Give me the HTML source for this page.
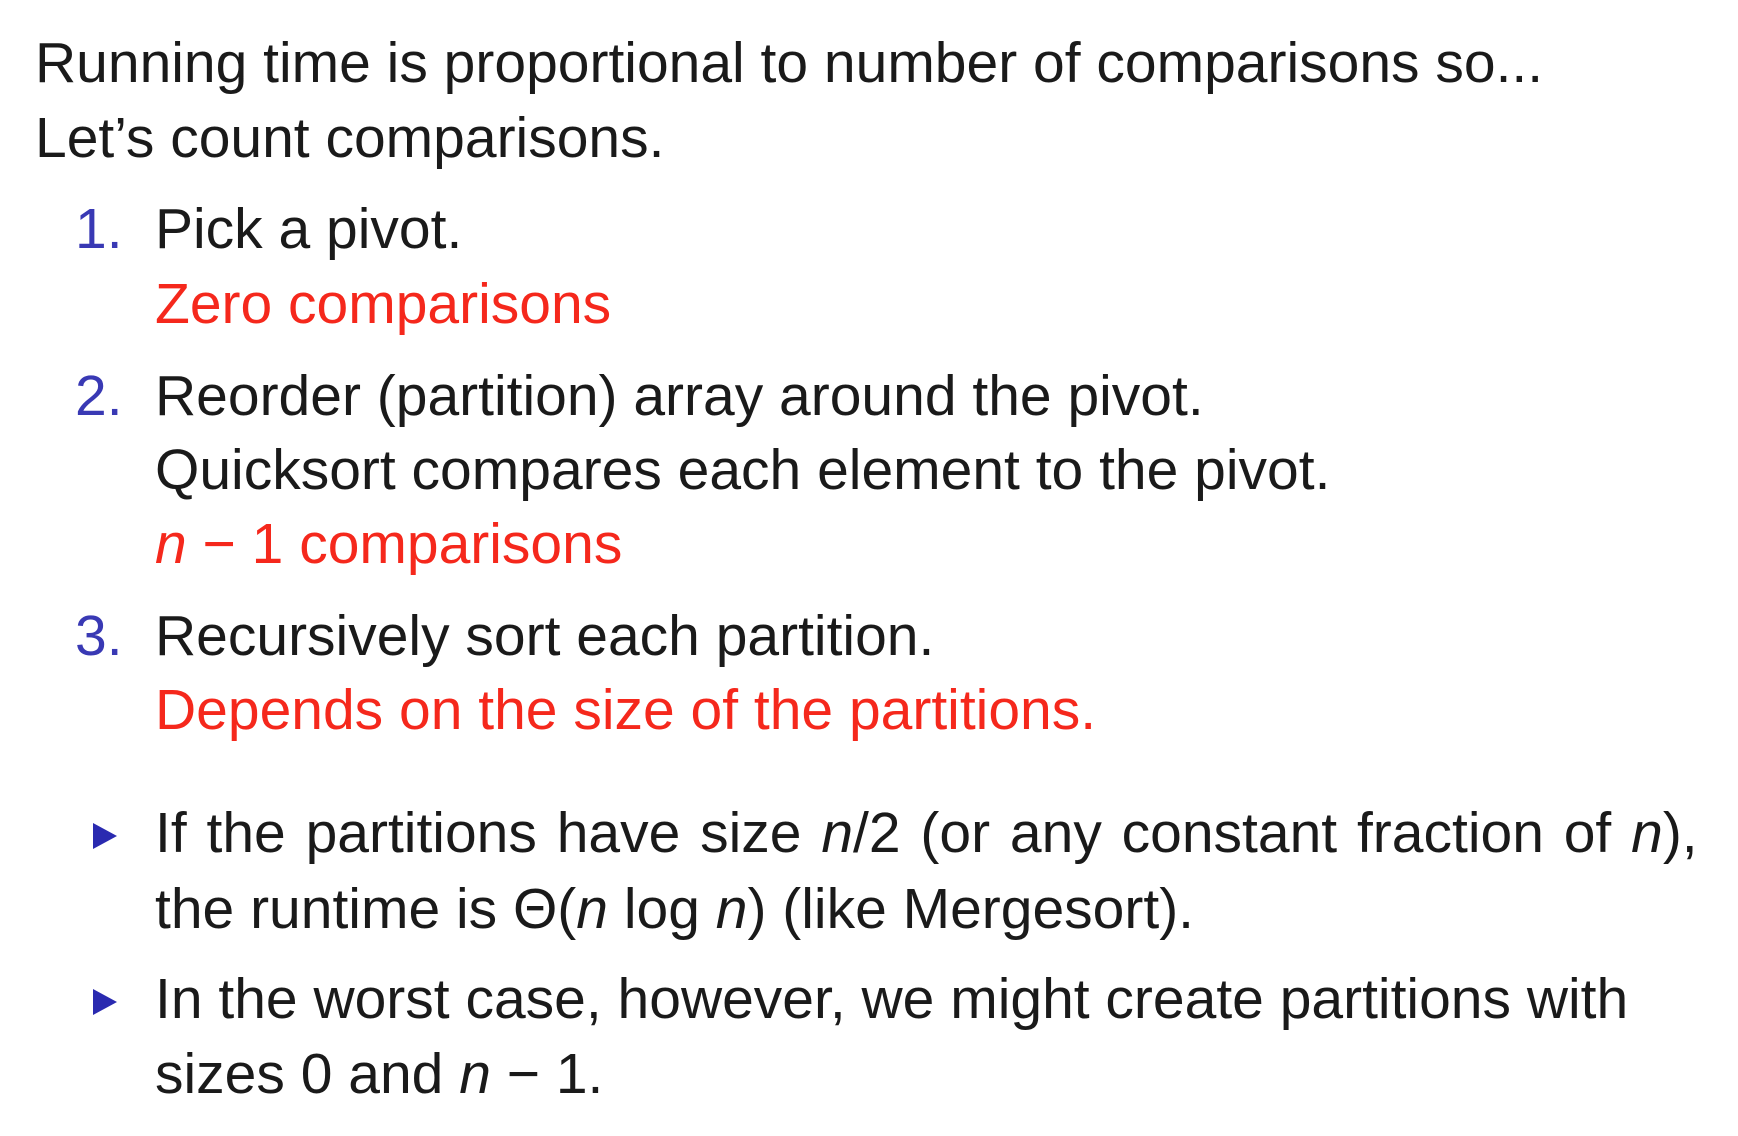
<!DOCTYPE html>
<html><head><meta charset="utf-8"><style>
body{margin:0;width:1738px;height:1136px;background:#fff;overflow:hidden;font-family:"Liberation Sans","DejaVu Sans",sans-serif;color:#1a1a1a}
.l{position:absolute;font-size:57px;line-height:57px;white-space:nowrap}
.b{color:#3939b4}.r{color:#f5281c}
i{font-family:"Liberation Sans",sans-serif}
.tri{position:absolute;width:0;height:0;border-top:13px solid transparent;border-bottom:13px solid transparent;border-left:24px solid #2a2ab0}
</style></head><body>
<div class="l" style="left:35px;top:35px">Running time is proportional to number of comparisons so...</div>
<div class="l" style="left:35px;top:110px">Let’s count comparisons.</div>
<div class="l b" style="left:75px;top:201px">1.</div>
<div class="l" style="left:155px;top:201px">Pick a pivot.</div>
<div class="l r" style="left:155px;top:276px">Zero comparisons</div>
<div class="l b" style="left:75px;top:368px">2.</div>
<div class="l" style="left:155px;top:368px">Reorder (partition) array around the pivot.</div>
<div class="l" style="left:155px;top:442px">Quicksort compares each element to the pivot.</div>
<div class="l r" style="left:155px;top:516px"><i>n</i> − 1 comparisons</div>
<div class="l b" style="left:75px;top:608px">3.</div>
<div class="l" style="left:155px;top:608px">Recursively sort each partition.</div>
<div class="l r" style="left:155px;top:682px">Depends on the size of the partitions.</div>
<div class="tri" style="left:93px;top:823px"></div>
<div class="l" style="left:155px;top:805px;word-spacing:4px">If the partitions have size <i>n</i>/2 (or any constant fraction of <i>n</i>),</div>
<div class="l" style="left:155px;top:881px">the runtime is Θ(<i>n</i> log <i>n</i>) (like Mergesort).</div>
<div class="tri" style="left:93px;top:989px"></div>
<div class="l" style="left:155px;top:971px">In the worst case, however, we might create partitions with</div>
<div class="l" style="left:155px;top:1046px">sizes 0 and <i>n</i> − 1.</div>
</body></html>
